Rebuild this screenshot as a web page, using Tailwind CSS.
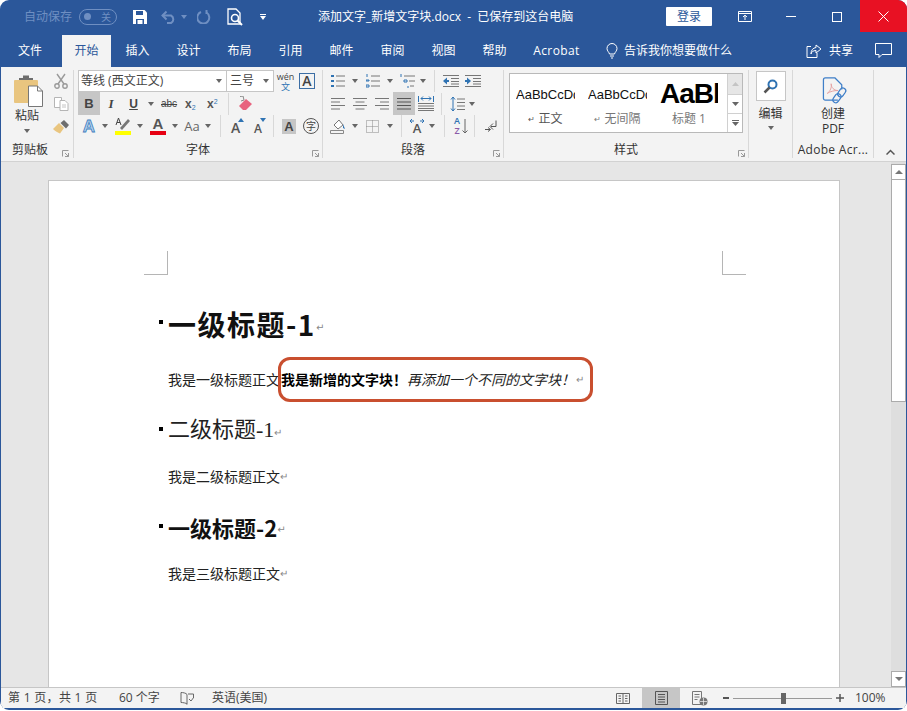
<!DOCTYPE html>
<html lang="zh">
<head>
<meta charset="utf-8">
<title>添加文字_新增文字块.docx</title>
<script src="https://cdn.jsdelivr.net/npm/@tailwindcss/browser@4"></script>
</head>
<body class="bg-white">
<div class="w-[907px] h-[711px] overflow-hidden bg-white [font-family:'Open_Sans','Noto_Sans_CJK_SC',sans-serif] text-[12px] leading-none">
<div class="relative w-[907px] h-[710px] rounded-[9px] overflow-hidden bg-[#2b579a] px-[1px] pb-[2px] flex flex-col">

<!-- title bar -->
<div class="h-[33px] -mx-[1px] flex items-center text-white shrink-0 relative">
  <span class="ml-[24px] text-[#6f8fc2] w-[48px] whitespace-nowrap">自动保存</span>
  <span class="ml-[7px] w-[38px] h-[16px] rounded-full border border-[#6f8fc2] flex items-center justify-between px-[4px] text-[#6f8fc2] text-[10px]"><span class="w-[7px] h-[7px] rounded-full bg-[#6f8fc2]"></span><span class="mr-[1px]">关</span></span>
  <svg class="ml-[16px]" width="14" height="14" viewBox="0 0 14 14"><path d="M0 0h11.500L14 2.500V14H0z" fill="#fff"/><path d="M3 1h7v4H3z" fill="#2b579a"/><path d="M3 9h8v5H3z" fill="#2b579a"/><path d="M4.500 10h5v4h-5z" fill="#fff"/></svg>
  <svg class="ml-[14px]" width="16" height="14" viewBox="0 0 16 14" fill="none" stroke="#6f8fc2" stroke-width="2"><path d="M1.500 5.500h8.500a4.200 4.200 0 0 1 0 7.500H6"/><path d="M5.500 1.500l-4 4 4 4"/></svg>
  <svg class="ml-[4px]" width="6" height="4" viewBox="0 0 6 4"><path d="M0 0h6L3 4z" fill="#6f8fc2"/></svg>
  <svg class="ml-[10px]" width="14" height="14" viewBox="0 0 14 14" fill="none" stroke="#6f8fc2" stroke-width="2"><path d="M9.500 2.500A6 6 0 1 1 4 2"/><path d="M9.500 0v4"/></svg>
  <svg class="ml-[16px]" width="17" height="18" viewBox="0 0 17 18" fill="none" stroke="#fff" stroke-width="1.300"><path d="M1 1h8l4 4v11H1z"/><circle cx="8" cy="10" r="3.500" fill="#2b579a" stroke-width="1.600"/><path d="M10.500 12.500L15 17" stroke-width="2"/></svg>
  <span class="ml-[16px] flex flex-col gap-[1px] items-center w-[6px]"><span class="w-[6px] h-[1px] bg-white"></span><svg width="6" height="4" viewBox="0 0 6 4"><path d="M0 0h6L3 4z" fill="#fff"/></svg></span>
  <span class="ml-[52px] w-[262px] whitespace-nowrap">添加文字_新增文字块.docx&nbsp; -&nbsp; 已保存到这台电脑</span>
  <span class="ml-[86px] w-[46px] h-[19px] bg-white text-[#2b579a] rounded-[1px] flex items-center justify-center">登录</span>
  <svg class="ml-[26px]" width="14" height="11" viewBox="0 0 14 11" fill="none" stroke="#fff"><path d="M.5.500h13v10H.5zM.5 2.500h13"/><path d="M7 9V4.500M5 6l2-1.800L9 6"/></svg>
  <span class="ml-[34px] w-[10px] h-[1px] bg-white"></span>
  <span class="ml-[36px] w-[10px] h-[10px] border border-white"></span>
  <span class="ml-[18px] w-[47px] h-[32px] bg-[#e81123] flex items-center justify-center self-start"><svg width="11" height="11" viewBox="0 0 11 11" stroke="#fff"><path d="M.5.500l10 10M10.500.500l-10 10"/></svg></span>
</div>

<!-- tabs -->
<div class="h-[34px] flex items-end text-white shrink-0 -mx-[1px] relative">
  <span class="w-[60px] h-[32px] flex items-center justify-center">文件</span>
  <span class="ml-[2px] w-[49px] h-[32px] bg-[#f3f3f3] text-[#2b579a] flex items-center justify-center">开始</span>
  <span class="ml-[1px] w-[51px] h-[32px] flex items-center justify-center">插入</span>
  <span class="w-[51px] h-[32px] flex items-center justify-center">设计</span>
  <span class="w-[51px] h-[32px] flex items-center justify-center">布局</span>
  <span class="w-[51px] h-[32px] flex items-center justify-center">引用</span>
  <span class="w-[51px] h-[32px] flex items-center justify-center">邮件</span>
  <span class="w-[51px] h-[32px] flex items-center justify-center">审阅</span>
  <span class="w-[51px] h-[32px] flex items-center justify-center">视图</span>
  <span class="w-[51px] h-[32px] flex items-center justify-center">帮助</span>
  <span class="ml-[11px] w-[51px] h-[32px] flex items-center justify-center tracking-[.4px]">Acrobat</span>
  <span class="h-[32px] flex items-center ml-[24px]">
    <svg width="12" height="16" viewBox="0 0 12 16" fill="none" stroke="#fff"><path d="M3.500 11C3 9 1 8 1 5.500a5 5 0 0 1 10 0C11 8 9 9 8.500 11zM4 13h4M5 15h2"/></svg>
    <span class="ml-[6px] whitespace-nowrap">告诉我你想要做什么</span>
  </span>
  <span class="h-[32px] flex items-center ml-[74px]">
    <svg width="16" height="14" viewBox="0 0 16 14" fill="none" stroke="#fff"><path d="M5 2.500H1v11h10V9"/><path d="M10 1l5 4-5 4V6.500C7 6.500 5.500 8 5 10c0-4 2-6 5-6.500z"/></svg>
    <span class="ml-[7px] whitespace-nowrap">共享</span>
  </span>
  <span class="h-[32px] flex items-center ml-[22px]"><svg width="17" height="16" viewBox="0 0 17 16" fill="none" stroke="#fff"><path d="M.5.500h16v11H7l-3 3v-3H.5z"/></svg></span>
</div>

<!-- ribbon -->
<div class="h-[95px] bg-[#f3f3f3] border-b border-[#d2d2d2] flex pt-[3px] text-[#444] shrink-0">
  <!-- clipboard -->
  <div class="w-[73px] h-[88px] border-r border-[#d8d8d8] flex flex-col shrink-0">
    <div class="flex h-[68px]">
      <div class="w-[50px] flex flex-col items-center">
        <svg class="mt-[5px] ml-[5px]" width="29" height="32" viewBox="0 0 29 32"><rect x="0" y="5" width="24" height="23" rx="1" fill="#e9c57f"/><path d="M5 5h14v-2h-4V.500H9V3H5z" fill="#6e6e6e"/><path d="M14.500 11h9l5 5v15.500h-14z" fill="#fff" stroke="#777"/><path d="M23.500 11v5h5" fill="none" stroke="#777"/></svg>
        <span class="mt-[1px] ml-[2px] text-[#333] h-[16px] leading-[16px]">粘贴</span>
        <svg class="mt-[5px] ml-[2px]" width="6" height="4" viewBox="0 0 6 4"><path d="M0 0h6L3 4z" fill="#666"/></svg>
      </div>
      <div class="w-[20px] flex flex-col items-center">
        <svg class="mt-[3px]" width="14" height="16" viewBox="0 0 14 16" fill="none" stroke="#9a9a9a" stroke-width="1.400"><circle cx="3" cy="13" r="2.200"/><circle cx="11" cy="13" r="2.200"/><path d="M4 11L11 1M10 11L3 1"/></svg>
        <svg class="mt-[8px]" width="15" height="14" viewBox="0 0 15 14" fill="#fff" stroke="#b5b5b5"><path d="M.5.500h7v10h-7z"/><path d="M6 3.500h5l3 3v7H6z"/><path d="M8 8h4M8 10h4" stroke-width=".8"/></svg>
        <svg class="mt-[9px]" width="16" height="14" viewBox="0 0 16 14"><path d="M0 9l6-6 5 5-4 5.500C5 13 2 11 0 9z" fill="#e9c57f"/><path d="M7.500 3L11 0l5 5-3 3.500z" fill="#6e6e6e"/></svg>
      </div>
    </div>
    <div class="h-[21px] relative flex items-end"><span class="ml-[11px] h-[16px] leading-[16px] text-[#333]">剪贴板</span>
      <svg class="absolute left-[61px] bottom-[1px]" width="7" height="7" viewBox="0 0 7 7" fill="none" stroke="#999"><path d="M.5 6.500V.500h6M3 3l3.500 3.500M6.500 3v3.500H3"/></svg></div>
  </div>

  <!-- font -->
  <div class="w-[249px] h-[88px] border-r border-[#d8d8d8] flex flex-col shrink-0">
    <div class="h-[23px] flex items-start pl-[4px]">
      <div class="w-[149px] h-[22px] bg-white border border-[#c6c6c6] flex items-center justify-between pl-[2px] pr-[4px] text-[#444] whitespace-nowrap"><span>等线 (西文正文)</span><svg width="6" height="4" viewBox="0 0 6 4"><path d="M0 0h6L3 4z" fill="#666"/></svg></div>
      <div class="w-[47px] h-[22px] bg-white border border-[#c6c6c6] border-l-0 flex items-center justify-between pl-[3px] pr-[4px]"><span>三号</span><svg width="6" height="4" viewBox="0 0 6 4"><path d="M0 0h6L3 4z" fill="#666"/></svg></div>
      <div class="ml-[3px] w-[17px] flex flex-col items-center text-[9px] leading-[10px] pt-[2px] text-[#444]"><span>wén</span><span class="text-[#2f73b3] text-[9px]">文</span></div>
      <div class="ml-[5px] mt-[3px] w-[16px] h-[16px] border border-[#3c6ea5] flex items-center justify-center text-[14px] font-semibold text-[#444]">A</div>
    </div>
    <div class="h-[23px] flex items-center pl-[4px] relative">
      <span class="w-[22px] h-[23px] bg-[#c6c6c6] flex items-center justify-center font-bold text-[13px] [font-family:'Liberation_Sans',sans-serif]">B</span>
      <span class="ml-[7px] w-[8px] text-center italic font-semibold text-[13px] [font-family:'Liberation_Serif',serif]">I</span>
      <span class="ml-[14px] w-[9px] text-center font-bold text-[12px] underline [font-family:'Liberation_Sans',sans-serif]">U</span>
      <svg class="ml-[10px]" width="6" height="4" viewBox="0 0 6 4"><path d="M0 0h6L3 4z" fill="#666"/></svg>
      <span class="ml-[7px] w-[16px] text-center line-through text-[10px] [font-family:'Liberation_Sans',sans-serif]">abc</span>
      <span class="ml-[8px] w-[12px] font-bold text-[12px] text-[#555] [font-family:'Liberation_Sans',sans-serif]">x<sub class="text-[7px] font-normal text-[#2f73b3]">2</sub></span>
      <span class="ml-[10px] w-[12px] font-bold text-[12px] text-[#555] [font-family:'Liberation_Sans',sans-serif]">x<sup class="text-[7px] font-normal text-[#2f73b3]">2</sup></span>
      <span class="ml-[9px] w-[1px] h-[22px] bg-[#d8d8d8]"></span>
      <svg class="ml-[9px]" width="15" height="15" viewBox="0 0 15 15"><path d="M1 10l7-7 6 5-6 6H5z" fill="#e8647f"/><path d="M2 .500L5 0l1 4-3 1" fill="none" stroke="#888"/></svg>
    </div>
    <div class="h-[22px] flex items-center pl-[8px]">
      <span class="w-[14px] text-center text-[17px] font-bold text-[#b7d3ee] [-webkit-text-stroke:0.8px_#3f7fc0] [font-family:'Liberation_Sans',sans-serif]">A</span>
      <svg class="ml-[6px]" width="6" height="4" viewBox="0 0 6 4"><path d="M0 0h6L3 4z" fill="#666"/></svg>
      <span class="ml-[7px] w-[16px] flex flex-col items-center">
        <svg width="16" height="13" viewBox="0 0 16 13"><path d="M5 11l8-9 2 2-8 9z" fill="#777"/><path d="M1 8L3.500 1 6 8M2 5.500h3" fill="none" stroke="#444"/></svg>
        <span class="w-[16px] h-[4px] bg-[#ffff00] mt-[1px]"></span>
      </span>
      <svg class="ml-[6px]" width="6" height="4" viewBox="0 0 6 4"><path d="M0 0h6L3 4z" fill="#666"/></svg>
      <span class="ml-[7px] w-[16px] flex flex-col items-center">
        <span class="text-[15px] h-[13px] leading-[14px] text-[#555] font-semibold [font-family:'Liberation_Sans',sans-serif]">A</span>
        <span class="w-[16px] h-[4px] bg-[#e60012] mt-[1px]"></span>
      </span>
      <svg class="ml-[6px]" width="6" height="4" viewBox="0 0 6 4"><path d="M0 0h6L3 4z" fill="#666"/></svg>
      <span class="ml-[6px] w-[16px] text-center text-[13px] text-[#666] whitespace-nowrap">Aa</span>
      <svg class="ml-[5px]" width="6" height="4" viewBox="0 0 6 4"><path d="M0 0h6L3 4z" fill="#666"/></svg>
      <span class="ml-[9px] w-[1px] h-[22px] bg-[#d8d8d8]"></span>
      <span class="ml-[10px] w-[13px] relative text-[14px] text-[#555] font-semibold flex items-end h-[17px]">A<svg class="absolute right-[0px] top-[0px]" width="6" height="4" viewBox="0 0 6 4"><path d="M0 4h6L3 0z" fill="#2f73b3"/></svg></span>
      <span class="ml-[10px] w-[12px] relative text-[12px] text-[#555] font-semibold flex items-end h-[17px]">A<svg class="absolute right-[0px] top-[0px]" width="6" height="4" viewBox="0 0 6 4"><path d="M0 0h6L3 4z" fill="#2f73b3"/></svg></span>
      <span class="ml-[7px] w-[1px] h-[22px] bg-[#d8d8d8]"></span>
      <span class="ml-[8px] w-[14px] h-[15px] bg-[#c6c6c6] flex items-center justify-center text-[13px] font-bold text-[#444] [font-family:'Liberation_Sans',sans-serif]">A</span>
      <span class="ml-[7px] w-[16px] h-[16px] rounded-full border border-[#555] flex items-center justify-center text-[10px]">字</span>
    </div>
    <div class="h-[21px] relative flex items-end justify-center"><span class="h-[16px] leading-[16px] text-[#333]">字体</span>
      <svg class="absolute right-[3px] bottom-[1px]" width="7" height="7" viewBox="0 0 7 7" fill="none" stroke="#999"><path d="M.5 6.500V.500h6M3 3l3.500 3.500M6.500 3v3.500H3"/></svg></div>
  </div>

  <!-- paragraph -->
  <div class="w-[181px] h-[88px] border-r border-[#d8d8d8] flex flex-col shrink-0">
    <div class="h-[23px] flex items-center pl-[8px]">
      <svg width="14" height="14" viewBox="0 0 14 14"><g fill="#2f73b3"><rect x="0" y="1" width="3" height="2"/><rect x="0" y="6" width="3" height="2"/><rect x="0" y="11" width="3" height="2"/></g><path d="M5 2h9M5 7h9M5 12h9" stroke="#777"/></svg>
      <svg class="ml-[7px]" width="6" height="4" viewBox="0 0 6 4"><path d="M0 0h6L3 4z" fill="#666"/></svg>
      <svg class="ml-[8px]" width="14" height="14" viewBox="0 0 14 14"><path d="M1 0v3M0 6h3v1H0zM0 11h3v2H0z" stroke="#2f73b3" fill="none"/><path d="M5 2h9M5 7h9M5 12h9" stroke="#777"/></svg>
      <svg class="ml-[7px]" width="6" height="4" viewBox="0 0 6 4"><path d="M0 0h6L3 4z" fill="#666"/></svg>
      <svg class="ml-[7px]" width="15" height="14" viewBox="0 0 15 14"><path d="M1 0v3M4 6h3v2H4zM8 12v2" stroke="#2f73b3" fill="none"/><path d="M4 2h11M9 7h6M10 12h4" stroke="#777"/></svg>
      <svg class="ml-[5px]" width="6" height="4" viewBox="0 0 6 4"><path d="M0 0h6L3 4z" fill="#666"/></svg>
      <span class="ml-[8px] w-[1px] h-[22px] bg-[#d8d8d8]"></span>
      <svg class="ml-[8px]" width="16" height="12" viewBox="0 0 16 12"><path d="M0 6l4-3.500v7z" fill="#2f73b3"/><path d="M3 6h3" stroke="#2f73b3" stroke-width="2"/><path d="M0 .500h16M8 3.500h8M8 6.500h8M8 9h8M0 11.500h16" stroke="#777"/></svg>
      <svg class="ml-[6px]" width="16" height="12" viewBox="0 0 16 12"><path d="M6 6L2 2.500v7z" fill="#2f73b3"/><path d="M0 6h3" stroke="#2f73b3" stroke-width="2"/><path d="M0 .500h16M8 3.500h8M8 6.500h8M8 9h8M0 11.500h16" stroke="#777"/></svg>
    </div>
    <div class="h-[23px] flex items-center pl-[8px]">
      <svg width="14" height="12" viewBox="0 0 14 12" stroke="#777"><path d="M0 .500h14M0 4h9M0 7.500h14M0 11h9"/></svg>
      <svg class="ml-[8px]" width="14" height="12" viewBox="0 0 14 12" stroke="#777"><path d="M0 .500h14M2.500 4h9M0 7.500h14M2.500 11h9"/></svg>
      <svg class="ml-[8px]" width="14" height="12" viewBox="0 0 14 12" stroke="#777"><path d="M0 .500h14M5 4h9M0 7.500h14M5 11h9"/></svg>
      <span class="ml-[4px] w-[22px] h-[23px] bg-[#c6c6c6] flex items-center justify-center"><svg width="14" height="12" viewBox="0 0 14 12" stroke="#555"><path d="M0 .500h14M0 4h14M0 7.500h14M0 11h14"/></svg></span>
      <svg class="ml-[3px]" width="16" height="15" viewBox="0 0 16 15"><path d="M.5 0v6M15.500 0v6M3 2.500h10M3 2.500l2-2M3 2.500l2 2M13 2.500l-2-2M13 2.500l-2 2" stroke="#2f73b3" fill="none"/><path d="M0 7.500h16M0 10h16M0 12.500h16M0 14.500h16" stroke="#777"/></svg>
      <span class="ml-[7px] w-[1px] h-[22px] bg-[#d8d8d8]"></span>
      <svg class="ml-[8px]" width="15" height="16" viewBox="0 0 15 16"><path d="M3 1v14M1 3.500L3 1l2 2.500M1 12.500L3 15l2-2.500" fill="none" stroke="#2f73b3"/><path d="M7 3h8M7 6.500h8M7 10h8M7 13.500h8" stroke="#777"/></svg>
      <svg class="ml-[4px]" width="6" height="4" viewBox="0 0 6 4"><path d="M0 0h6L3 4z" fill="#666"/></svg>
    </div>
    <div class="h-[22px] flex items-center pl-[7px]">
      <svg width="16" height="16" viewBox="0 0 16 16"><path d="M4 7l5-5 4 5-5 4z" fill="#fff" stroke="#777"/><path d="M13 6l2 5-2-1z" fill="#2f73b3"/><path d="M.5 12.500h13v3H.5z" fill="#f3f3f3" stroke="#888"/></svg>
      <svg class="ml-[6px]" width="6" height="4" viewBox="0 0 6 4"><path d="M0 0h6L3 4z" fill="#666"/></svg>
      <svg class="ml-[8px]" width="13" height="13" viewBox="0 0 13 13" fill="none" stroke="#888" stroke-dasharray="1 1"><path d="M.5.500h12v12H.5zM.5 6.500h12M6.500.500v12"/></svg>
      <svg class="ml-[8px]" width="6" height="4" viewBox="0 0 6 4"><path d="M0 0h6L3 4z" fill="#666"/></svg>
      <span class="ml-[8px] w-[1px] h-[22px] bg-[#d8d8d8]"></span>
      <span class="ml-[7px] w-[16px] h-[17px] relative flex justify-center items-end text-[13px] font-semibold text-[#555]">A<svg class="absolute left-[0px] top-[0px]" width="16" height="6" viewBox="0 0 16 6" fill="none" stroke="#2f73b3"><path d="M1 3h4M1 3l2-2M1 3l2 2M15 3h-4M15 3l-2-2M15 3l-2 2"/></svg></span>
      <svg class="ml-[4px]" width="6" height="4" viewBox="0 0 6 4"><path d="M0 0h6L3 4z" fill="#666"/></svg>
      <span class="ml-[9px] w-[1px] h-[22px] bg-[#d8d8d8]"></span>
      <span class="ml-[8px] w-[8px] flex flex-col items-center text-[9px] leading-[10px] font-semibold"><span class="text-[#2f73b3]">A</span><span class="text-[#8a5aa8]">Z</span></span>
      <svg class="ml-[1px]" width="6" height="15" viewBox="0 0 6 15" fill="none" stroke="#666"><path d="M3 0v14M.5 11.500L3 14l2.500-2.500"/></svg>
      <span class="ml-[6px] w-[1px] h-[22px] bg-[#d8d8d8]"></span>
      <svg class="ml-[10px]" width="12" height="13" viewBox="0 0 12 13" fill="none" stroke="#555"><path d="M11 .500v6H6M8 3.500L5 6.500l3 3M0 9.500h5M3 7.500l2.500 2-2.500 2"/></svg>
    </div>
    <div class="h-[21px] relative flex items-end justify-center"><span class="h-[16px] leading-[16px] text-[#333]">段落</span>
      <svg class="absolute right-[3px] bottom-[1px]" width="7" height="7" viewBox="0 0 7 7" fill="none" stroke="#999"><path d="M.5 6.500V.500h6M3 3l3.500 3.500M6.500 3v3.500H3"/></svg></div>
  </div>

  <!-- styles -->
  <div class="w-[245px] h-[88px] border-r border-[#d8d8d8] flex flex-col shrink-0">
    <div class="h-[68px] pl-[5px] pt-[3px]">
      <div class="w-[234px] h-[60px] bg-white border border-[#b9b9b9] flex">
        <div class="w-[217px] flex pl-[6px]">
          <div class="w-[72px] flex flex-col">
            <span class="h-[39px] w-[59px] overflow-hidden whitespace-nowrap flex items-center text-[13px] text-[#111] pt-[2px] [font-family:'Liberation_Sans',sans-serif]">AaBbCcDdEe</span>
            <span class="text-[#555] flex items-center justify-center w-[59px]"><span class="text-[8px] mr-[3px]">↵</span>正文</span>
          </div>
          <div class="w-[72px] flex flex-col">
            <span class="h-[39px] w-[59px] overflow-hidden whitespace-nowrap flex items-center text-[13px] text-[#111] pt-[2px] [font-family:'Liberation_Sans',sans-serif]">AaBbCcDdEe</span>
            <span class="text-[#777] flex items-center justify-center w-[59px]"><span class="text-[8px] mr-[3px]">↵</span>无间隔</span>
          </div>
          <div class="w-[60px] flex flex-col">
            <span class="h-[39px] w-[58px] overflow-hidden whitespace-nowrap flex items-center text-[28px] font-bold tracking-[-1px] text-black [font-family:'Liberation_Sans',sans-serif]">AaBbCc</span>
            <span class="text-[#777] flex items-center justify-center w-[58px]">标题 1</span>
          </div>
        </div>
        <div class="w-[15px] flex flex-col border-l border-[#d0d0d0]">
          <span class="h-[21px] bg-[#e6e6e6] border-b border-[#d0d0d0] flex items-center justify-center"><svg width="7" height="4" viewBox="0 0 7 4"><path d="M0 4h7L3.500 0z" fill="#c4c4c4"/></svg></span>
          <span class="h-[19px] border-b border-[#d0d0d0] flex items-center justify-center"><svg width="7" height="4" viewBox="0 0 7 4"><path d="M0 0h7L3.500 4z" fill="#666"/></svg></span>
          <span class="flex-1 flex flex-col gap-[1px] items-center justify-center"><span class="w-[7px] h-[1px] bg-[#666]"></span><svg width="7" height="4" viewBox="0 0 7 4"><path d="M0 0h7L3.500 4z" fill="#666"/></svg></span>
        </div>
      </div>
    </div>
    <div class="h-[21px] relative flex items-end justify-center"><span class="h-[16px] leading-[16px] text-[#333]">样式</span>
      <svg class="absolute right-[3px] bottom-[1px]" width="7" height="7" viewBox="0 0 7 7" fill="none" stroke="#999"><path d="M.5 6.500V.500h6M3 3l3.500 3.500M6.500 3v3.500H3"/></svg></div>
  </div>

  <!-- edit -->
  <div class="w-[44px] h-[88px] border-r border-[#d8d8d8] flex flex-col items-center shrink-0 pt-[1px]">
    <span class="w-[30px] h-[30px] bg-white border border-[#c6c6c6] flex items-center justify-center"><svg width="15" height="15" viewBox="0 0 15 15" fill="none"><circle cx="9.500" cy="5.500" r="4" stroke="#2f73b3" stroke-width="2"/><path d="M6.500 8.500L1.500 13.500" stroke="#555" stroke-width="2.500"/></svg></span>
    <span class="mt-[5px] h-[16px] leading-[16px] text-[#333]">编辑</span>
    <svg class="mt-[4px]" width="6" height="4" viewBox="0 0 6 4"><path d="M0 0h6L3 4z" fill="#666"/></svg>
  </div>

  <!-- adobe -->
  <div class="w-[81px] h-[88px] border-r border-[#d8d8d8] flex flex-col items-center shrink-0">
    <svg class="mt-[7px] ml-[4px]" width="26" height="28" viewBox="0 0 26 28" fill="none" stroke="#3f7fc8" stroke-width="1.300"><path d="M16 24H3a2 2 0 0 1-2-2V3a2 2 0 0 1 2-2h10l7 7v5"/><path d="M5 17c3-2 5-7 4-10 0 4 3 7 7 7-4 0-8 1-11 3z" stroke-width="1" stroke="#e4a0a0"/><rect x="17" y="11" width="6" height="10" rx="3" transform="rotate(35 20 16)"/><rect x="12" y="17" width="6" height="10" rx="3" transform="rotate(35 15 22)"/></svg>
    <span class="mt-[2px] h-[15px] leading-[15px] text-[#333]">创建</span>
    <span class="h-[15px] leading-[15px] text-[#333]">PDF</span>
    <span class="mt-[6px] h-[16px] leading-[16px] text-[#333] whitespace-nowrap tracking-[.3px]">Adobe Acr...</span>
  </div>
  <div class="flex-1 h-[88px] flex items-end pb-[3px] pl-[12px]"><svg width="9" height="6" viewBox="0 0 9 6" fill="none" stroke="#555" stroke-width="1.500"><path d="M.5 5.500l4-4 4 4"/></svg></div>
</div>

<!-- document area -->
<div class="relative flex-1 bg-[#e6e6e6] flex overflow-hidden">
  <div class="w-[47px] shrink-0"></div>
  <div class="relative w-[792px] h-[600px] mt-[18px] shrink-0 bg-white border border-[#c6c6c6] pl-[119px] pt-[122px] text-[#222] [font-family:'Liberation_Sans','Noto_Sans_CJK_SC',sans-serif]">
    <span class="absolute left-[95px] top-[70px] w-[24px] h-[24px] border-r border-b border-[#b5b5b5]"></span>
    <span class="absolute left-[673px] top-[70px] w-[24px] h-[24px] border-l border-b border-[#b5b5b5]"></span>
    <div class="relative h-[40px] pt-[2px] flex items-center text-[28px] font-bold tracking-[1.500px] text-[#111] whitespace-nowrap [font-family:'Noto_Sans_CJK_SC',sans-serif]"><span class="absolute left-[-9px] top-[17px] w-[4px] h-[4px] bg-black"></span>一级标题-1<span class="text-[10px] font-normal text-[#888] mt-[8px] tracking-normal [font-family:'DejaVu_Sans',sans-serif]">↵</span></div>
    <div class="mt-[27px] h-[20px] flex items-center text-[14px] whitespace-nowrap">我是一级标题正文<span class="font-bold text-black ml-[1px]">我是新增的文字块！</span><span class="italic">再添加一个不同的文字块！</span><span class="text-[10px] text-[#888] ml-[1px]">↵</span></div>
    <div class="relative mt-[24px] h-[30px] pt-[1px] flex items-center text-[22px] text-[#222] whitespace-nowrap [font-family:'Liberation_Serif','Noto_Sans_CJK_SC',serif]"><span class="absolute left-[-9px] top-[13px] w-[4px] h-[4px] bg-black"></span>二级标题-1<span class="text-[10px] text-[#888] mt-[6px]">↵</span></div>
    <div class="mt-[23px] h-[20px] flex items-center text-[14px] whitespace-nowrap">我是二级标题正文<span class="text-[10px] text-[#888]">↵</span></div>
    <div class="relative mt-[24px] h-[30px] pt-[1px] flex items-center text-[22px] font-bold text-[#111] whitespace-nowrap [font-family:'Noto_Sans_CJK_SC',sans-serif]"><span class="absolute left-[-9px] top-[13px] w-[4px] h-[4px] bg-black"></span>一级标题-2<span class="text-[10px] font-normal text-[#888] mt-[6px] [font-family:'DejaVu_Sans',sans-serif]">↵</span></div>
    <div class="mt-[23px] h-[20px] flex items-center text-[14px] whitespace-nowrap">我是三级标题正文<span class="text-[10px] text-[#888]">↵</span></div>
    <span class="absolute left-[229px] top-[176px] w-[315px] h-[45px] border-[3px] border-[#c94f2f] rounded-[12px]"></span>
  </div>
  <div class="w-[50px] shrink-0"></div>
  <!-- scrollbar -->
  <div class="w-[16px] shrink-0 flex flex-col bg-[#dedede] border-l border-[#e6e6e6] pt-[2px]">
    <span class="h-[16px] bg-white border border-[#ababab] flex items-center justify-center"><svg width="8" height="4" viewBox="0 0 8 4"><path d="M0 4h8L4 0z" fill="#777"/></svg></span>
    <span class="h-[222px] bg-white border border-t-0 border-[#ababab]"></span>
    <span class="flex-1"></span>
    <span class="h-[16px] bg-white border border-[#ababab] flex items-center justify-center"><svg width="8" height="4" viewBox="0 0 8 4"><path d="M0 0h8L4 4z" fill="#777"/></svg></span>
  </div>
</div>

<!-- status bar -->
<div class="h-[21px] bg-[#f3f3f3] border-t border-[#c6c6c6] flex items-center text-[#444] shrink-0 relative">
  <span class="ml-[7px] w-[90px] whitespace-nowrap tracking-[.3px]">第 1 页，共 1 页</span>
  <span class="ml-[21px] w-[44px] whitespace-nowrap">60 个字</span>
  <svg class="ml-[17px]" width="14" height="13" viewBox="0 0 14 13" fill="none" stroke="#666"><path d="M7 2.500C6 1 3 .500 1 .500v10c2 0 5 .5 6 1.500M7 2.500v10M8 2h5.500v4"/><path d="M9 7l2 2 3-4" stroke="#666"/></svg>
  <span class="ml-[18px] w-[58px] whitespace-nowrap">英语(美国)</span>
  <svg class="ml-[346px]" width="14" height="13" viewBox="0 0 14 13" fill="none" stroke="#666"><path d="M.5 1.500h13v10H.5zM7 1.500v10M2.500 4H5M2.500 6.500H5M2.500 9H5M9 4h2.500M9 6.500h2.500M9 9h2.500"/></svg>
  <span class="ml-[12px] w-[38px] h-[20px] bg-[#c6c6c6] flex items-center justify-center"><svg width="13" height="14" viewBox="0 0 13 14" fill="none" stroke="#555"><path d="M.5.500h12v13H.5zM3 3.500h7M3 6h7M3 8.500h7M3 11h7"/></svg></span>
  <svg class="ml-[12px]" width="16" height="15" viewBox="0 0 16 15"><path d="M.5.500h9v13H.5zM2.500 3.500h5M2.500 6h5M2.500 8.500h3" fill="none" stroke="#777"/><circle cx="11.500" cy="10.500" r="4" fill="#777"/><path d="M8 10.500h7M11.500 7v7" stroke="#f3f3f3" stroke-width=".7"/></svg>
  <span class="ml-[15px] w-[6px] h-[2px] bg-[#555]"></span>
  <span class="relative ml-[4px] w-[99px] h-[1px] bg-[#999]"><span class="absolute left-[48px] top-[-5px] w-[5px] h-[11px] bg-[#666]"></span></span>
  <svg class="ml-[4px]" width="8" height="8" viewBox="0 0 8 8" stroke="#555" stroke-width="1.500"><path d="M0 4h8M4 0v8"/></svg>
  <span class="ml-[11px] whitespace-nowrap">100%</span>
</div>
</div>
</div>
</body>
</html>
